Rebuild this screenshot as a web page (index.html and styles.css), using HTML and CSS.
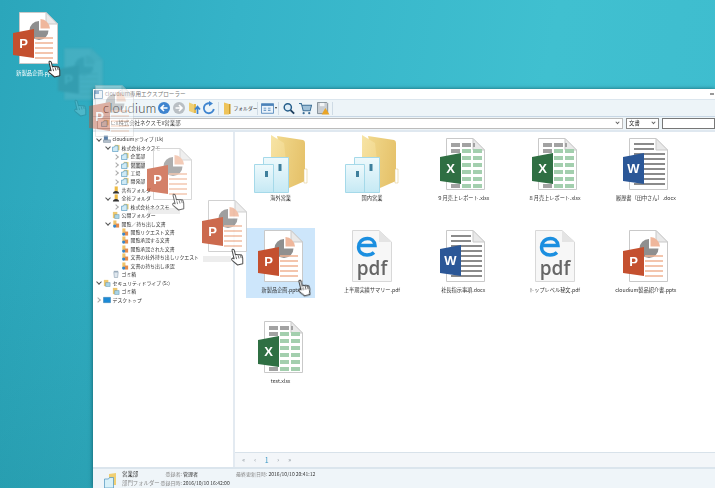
FILE: index.html
```html
<!DOCTYPE html>
<html lang="ja">
<head>
<meta charset="utf-8">
<title>cloudium専用エクスプローラー</title>
<link rel="stylesheet" href="styles.css">
</head>
<body>
<svg class="defs" width="0" height="0" aria-hidden="true">
  <defs>
    <linearGradient id="gold" x1="0" y1="0" x2="1" y2="0.3">
      <stop offset="0" stop-color="#f1d88c"/><stop offset="1" stop-color="#e6c36c"/>
    </linearGradient>
    <linearGradient id="flap" x1="0" y1="0" x2="1" y2="1">
      <stop offset="0" stop-color="#f7e4a6"/><stop offset="1" stop-color="#eed07e"/>
    </linearGradient>
    <linearGradient id="ice" x1="0" y1="0" x2="0" y2="1">
      <stop offset="0" stop-color="#eef9fc"/><stop offset="1" stop-color="#c5e9f4"/>
    </linearGradient>
    <symbol id="page" viewBox="0 0 60 56">
      <path d="M13.5 1.5H40L51.5 13V52.5H13.5Z" fill="#fff" stroke="#c9c9c9"/>
      <path d="M40 1.5V13H51.500Z" fill="#e9e9e9" stroke="#c9c9c9"/>
    </symbol>
    <symbol id="ppt" viewBox="0 0 60 56">
      <use href="#page" width="60" height="56"/>
      <path d="M33 10A9.500 9.500 0 1 0 42.500 19.500H33Z" fill="#8f8f8f"/>
      <path d="M34.500 8A10 10 0 0 1 44 17.500H34.500Z" fill="#efb79c"/>
      <path d="M29 27H47M29 32H47M29 37H47M29 42H47M29 47H47" stroke="#f0b393" stroke-width="1.500"/>
      <path d="M7 22L28 18V47L7 44Z" fill="#c4502f"/>
      <text x="17.500" y="37" class="ic-letter">P</text>
    </symbol>
    <symbol id="xls" viewBox="0 0 60 56">
      <use href="#page" width="60" height="56"/>
      <path d="M18 6h9v4h-9zM29 6h9v4h-9zM18 12h9v4h-9z" fill="#a2a2a2"/>
      <path d="M40 6h2v4h-2z" fill="#a2a2a2"/>
      <path d="M29 12h9v4h-9zM40 12h9v4h-9zM29 19h9v4h-9zM40 19h9v4h-9zM29 26h9v4h-9zM40 26h9v4h-9zM29 33h9v4h-9zM40 33h9v4h-9zM29 40h9v4h-9zM40 40h9v4h-9zM29 47h9v4h-9zM40 47h9v4h-9z" fill="#a3cfae"/>
      <path d="M18 47h9v4h-9z" fill="#a2a2a2"/>
      <path d="M7 20L28 16V47L7 44Z" fill="#2f6f43"/>
      <text x="17.500" y="36" class="ic-letter">X</text>
    </symbol>
    <symbol id="doc" viewBox="0 0 60 56">
      <use href="#page" width="60" height="56"/>
      <path d="M18 7H38M18 12H38M18 17H49M28 22H49M28 27H49M28 32H49M28 37H49M28 42H49M18 47H49" stroke="#8b8b8b" stroke-width="1.800"/>
      <path d="M7 20L28 16V47L7 44Z" fill="#2b5797"/>
      <text x="17.500" y="36" class="ic-letter">W</text>
    </symbol>
    <symbol id="pdf" viewBox="0 0 60 56">
      <path d="M10.500 1.500H37L49.500 13V52.500H10.500Z" fill="#f7f7f7" stroke="#d8d8d8"/>
      <path d="M37 1.500V13H49.500Z" fill="#e4e4e4"/>
      <path d="M17.500 16.500H33C32.500 11.500 29 9.500 25.500 9.500C20 9.500 16.500 13.500 16.500 18C16.500 23 20.500 26 25 26C28 26 30.500 25 32 23.500" fill="none" stroke="#1b8fe0" stroke-width="3.400"/>
      <text x="30" y="46" class="ic-pdf">pdf</text>
    </symbol>
    <symbol id="folder" viewBox="0 0 60 56" overflow="visible">
      <path d="M26 -1L52 3Q54 3.500 54 6V44L38 51Z" fill="url(#gold)"/>
      <path d="M53 32h3v14h-3z" fill="#fff" stroke="#dcc07a" stroke-width=".5"/>
      <path d="M20 -2L33 6L38 51L20 30Z" fill="url(#flap)"/>
      <path d="M12.500 20.500H37.500V55.500H12.500Z" fill="url(#ice)" stroke="#a5d9e9"/>
      <path d="M3.500 27.500H22.500V55.500H3.500Z" fill="url(#ice)" stroke="#a5d9e9"/>
      <path d="M14 34h3v6h-3zM27.500 27h3v7h-3z" fill="#3e7f9c"/>
    </symbol>
    <symbol id="hand" viewBox="0 0 16 20">
      <path d="M4.600 1.200c1 0 1.700.7 1.700 1.700v5l1-.2c.8-.1 1.400.2 1.700.7.900-.3 1.600 0 1.900.6.900-.2 1.800.2 2 1 .3 2 .1 4-.5 5.600l-.8 3.200H5.900L1.600 13c-.7-1-.5-1.900.1-2.300.6-.4 1.300-.3 1.800.2l.4.6V2.900c0-1 .2-1.700.7-1.700z" fill="#fff" stroke="#333" stroke-width="1.100" stroke-linejoin="round"/>
      <path d="M6.400 9.500v3M9 9v3.500M11.400 9.600v3" stroke="#333" stroke-width=".8"/>
    </symbol>
    <symbol id="t-folder" viewBox="0 0 9 9">
      <path d="M3 .8L8.500 1V7H3Z" fill="#f1d27c"/>
      <path d="M.6 3.500h2l1-1.500h3.200v6.500H.6Z" fill="#cfeaf5" stroke="#4a93bd" stroke-width=".7"/>
    </symbol>
    <symbol id="t-share" viewBox="0 0 9 9">
      <path d="M3 .5h3.500v6H3Z" fill="#eebb45"/>
      <path d="M1 8.500c0-2 1.500-3 3.500-3s3.500 1 3.500 3Z" fill="#333"/>
    </symbol>
    <symbol id="t-doc" viewBox="0 0 9 9">
      <path d="M1.500 .5h3.500v6H1.500Z" fill="#f0c36a"/>
      <path d="M4 4h4v4.500H4Z" fill="#e58b4c"/>
      <circle cx="3" cy="6.800" r="1.800" fill="#3b86c8"/>
    </symbol>
    <symbol id="t-drive" viewBox="0 0 9 9">
      <path d="M1 .5h4.500v5H1Z" fill="#5a7fa8"/>
      <path d="M.5 5.500h8v2.800h-8Z" fill="#b8c4d0" stroke="#5a7084" stroke-width=".5"/>
    </symbol>
    <symbol id="t-trash" viewBox="0 0 9 9">
      <path d="M2 2.500h5l-.7 6H2.700Z" fill="#dfe7ee" stroke="#7d93a8" stroke-width=".6"/>
      <path d="M2 1.500h5" stroke="#7d93a8"/>
    </symbol>
    <symbol id="t-lock" viewBox="0 0 9 9">
      <path d="M1 1h5v7H1Z" fill="#eec86f"/>
      <path d="M3 4h5v4.500H3Z" fill="#a9d5e8" stroke="#5a8ba5" stroke-width=".5"/>
    </symbol>
    <symbol id="t-desk" viewBox="0 0 9 9">
      <path d="M.5 1.500h8v6h-8Z" fill="#1c8ad6" stroke="#105f98" stroke-width=".4"/>
    </symbol>
  </defs>
</svg>

<div class="desktop">
  <section class="window">
    <header class="titlebar">
      <svg class="title-icon" viewBox="0 0 9 9"><path d="M.5.5h8v8h-8Z" fill="#e8f2fa" stroke="#5c8db5"/><path d="M1 1h4v3H1Z" fill="#3e78b2"/></svg>
      <span class="title-text">cloudium専用エクスプローラー</span>
      <span class="minimize"></span>
    </header>

    <nav class="toolbar">
      <span class="logo">cloudium</span>
      <svg class="tb" viewBox="0 0 14 14"><circle cx="7" cy="7" r="6" fill="#3f84cf"/><path d="M10.500 7H4.500M7 4L4 7l3 3" fill="none" stroke="#fff" stroke-width="1.600"/></svg>
      <svg class="tb" viewBox="0 0 14 14"><circle cx="7" cy="7" r="6" fill="#b9bfc4"/><path d="M3.500 7h6M7 4l3 3-3 3" fill="none" stroke="#fff" stroke-width="1.600"/></svg>
      <svg class="tb" viewBox="0 0 14 14"><path d="M2 1.500L7 3.500V12L2 10Z" fill="#f0cf73"/><path d="M7 3h2v9H7Z" fill="#e3b94e"/><path d="M10.500 13V6M8 8.500l2.500-3 2.500 3" fill="none" stroke="#3f84cf" stroke-width="1.700"/></svg>
      <svg class="tb" viewBox="0 0 14 14"><path d="M11.800 8A5 5 0 1 1 8 2.400" fill="none" stroke="#3f84cf" stroke-width="1.800"/><path d="M7 0L11 2.600 7 5.200Z" fill="#3f84cf"/></svg>
      <i class="sep sep-a"></i>
      <svg class="tb-folder" viewBox="0 0 8 13"><path d="M1 .5L6 2V12.500H1Z" fill="#eec35a"/><path d="M6 2h1.500v10H6Z" fill="#c99a2c"/></svg>
      <span class="tb-label">フォルダー</span>
      <i class="sep sep-b"></i>
      <svg class="tb-view" viewBox="0 0 15 12"><path d="M.5.5h14v11H.5Z" fill="#eaf3fb" stroke="#4b82b8"/><path d="M.5.5h14v2.500H.5Z" fill="#4b82b8"/><path d="M3 5h3v1H3zM8 5h3v1H8zM3 7.500h3v1H3zM8 7.500h3v1H8z" fill="#4b82b8"/></svg>
      <i class="caret"></i>
      <i class="sep sep-c"></i>
      <svg class="tb-search" viewBox="0 0 14 14"><circle cx="5.600" cy="5.600" r="4.200" fill="#dcecf7" stroke="#255d8a" stroke-width="1.700"/><path d="M8.800 8.800L13 13" stroke="#1d3f5f" stroke-width="2.200"/></svg>
      <svg class="tb-cart" viewBox="0 0 14 14"><path d="M0 1.500h2.500L4.500 9.500H12L13.500 3.500H3" fill="#9fc0d8" stroke="#3d6f96" stroke-width="1.100"/><circle cx="5" cy="12" r="1.200" fill="#3d6f96"/><circle cx="11" cy="12" r="1.200" fill="#3d6f96"/></svg>
      <svg class="tb-save" viewBox="0 0 14 14"><path d="M.5.5h10l1 1v11H.5Z" fill="#c9ced3" stroke="#7f8a93"/><path d="M3 1h5v3.500H3Z" fill="#f2f4f6"/><path d="M9 6.500l4.500 7H5Z" fill="#e9a425"/></svg>
      <i class="sep"></i>
    </nav>

    <div class="addressbar">
      <div class="address">
        <svg class="addr-icon" viewBox="0 0 9 9"><use href="#t-folder" width="9" height="9"/></svg>
        <span>L:¥株式会社ネクスモ¥営業部</span>
        <i class="chev"></i>
      </div>
      <div class="select"><span>文書</span><i class="chev"></i></div>
      <div class="search"></div>
    </div>

    <main class="body">
      <aside class="tree">
        <div class="row l0 open"><i></i><svg><use href="#t-drive"/></svg><span>cloudiumドライブ (Lk)</span></div>
        <div class="row l1 open"><i></i><svg><use href="#t-folder"/></svg><span>株式会社ネクスモ</span></div>
        <div class="row l2 shut"><i></i><svg><use href="#t-folder"/></svg><span>企業部</span></div>
        <div class="row l2 shut cur"><i></i><svg><use href="#t-folder"/></svg><span>営業部</span></div>
        <div class="row l2 shut"><i></i><svg><use href="#t-folder"/></svg><span>工場</span></div>
        <div class="row l2 shut"><i></i><svg><use href="#t-folder"/></svg><span>開発部</span></div>
        <div class="row l1"><i></i><svg><use href="#t-share"/></svg><span>共有フォルダ</span></div>
        <div class="row l1 open"><i></i><svg><use href="#t-share"/></svg><span>全社フォルダ</span></div>
        <div class="row l2 shut"><i></i><svg><use href="#t-folder"/></svg><span>株式会社ネクスモ</span></div>
        <div class="row l1"><i></i><svg><use href="#t-lock"/></svg><span>公開フォルダー</span></div>
        <div class="row l1 open"><i></i><svg><use href="#t-doc"/></svg><span>閲覧／持ち出し文書</span></div>
        <div class="row l2"><i></i><svg><use href="#t-doc"/></svg><span>閲覧リクエスト文書</span></div>
        <div class="row l2"><i></i><svg><use href="#t-doc"/></svg><span>閲覧承認する文書</span></div>
        <div class="row l2"><i></i><svg><use href="#t-doc"/></svg><span>閲覧承認された文書</span></div>
        <div class="row l2"><i></i><svg><use href="#t-doc"/></svg><span>文書の社外持ち出しリクエスト</span></div>
        <div class="row l2"><i></i><svg><use href="#t-doc"/></svg><span>文書の持ち出し承認</span></div>
        <div class="row l1"><i></i><svg><use href="#t-trash"/></svg><span>ゴミ箱</span></div>
        <div class="row l0 open"><i></i><svg><use href="#t-lock"/></svg><span>セキュリティドライブ (S:)</span></div>
        <div class="row l1"><i></i><svg><use href="#t-lock"/></svg><span>ゴミ箱</span></div>
        <div class="row l0 shut"><i></i><svg><use href="#t-desk"/></svg><span>デスクトップ</span></div>
      </aside>

      <div class="content">
        <div class="files">
          <figure class="file"><svg class="fi"><use href="#folder"/></svg><figcaption>海外営業</figcaption></figure>
          <figure class="file"><svg class="fi"><use href="#folder"/></svg><figcaption>国内営業</figcaption></figure>
          <figure class="file"><svg class="fi"><use href="#xls"/></svg><figcaption>９月売上レポート.xlsx</figcaption></figure>
          <figure class="file"><svg class="fi"><use href="#xls"/></svg><figcaption>８月売上レポート.xlsx</figcaption></figure>
          <figure class="file"><svg class="fi"><use href="#doc"/></svg><figcaption>履歴書（田中さん）.docx</figcaption></figure>
          <figure class="file selected"><svg class="fi"><use href="#ppt"/></svg><figcaption>新製品企画.pptx</figcaption></figure>
          <figure class="file"><svg class="fi"><use href="#pdf"/></svg><figcaption>上半期実績サマリー.pdf</figcaption></figure>
          <figure class="file"><svg class="fi"><use href="#doc"/></svg><figcaption>社長指示事項.docx</figcaption></figure>
          <figure class="file"><svg class="fi"><use href="#pdf"/></svg><figcaption>トップレベル秘文.pdf</figcaption></figure>
          <figure class="file"><svg class="fi"><use href="#ppt"/></svg><figcaption>cloudium製品紹介書.pptx</figcaption></figure>
          <figure class="file"><svg class="fi"><use href="#xls"/></svg><figcaption>test.xlsx</figcaption></figure>
        </div>
        <div class="pager"><span>«</span><span>‹</span><b>1</b><span>›</span><span>»</span></div>
      </div>
    </main>

    <footer class="status">
      <svg class="st-icon" viewBox="0 0 14 15"><path d="M5 1L12 0V12H5Z" fill="#f0cf73"/><path d="M.5 6h4l1-1.500h4V15H.5Z" fill="#d7f0f8" stroke="#4a93bd" stroke-width=".7"/></svg>
      <div class="st-col st-name"><b>営業部</b><span>部門フォルダー</span></div>
      <div class="st-reg">
        <span>登録者:</span><b>管理者</b>
        <span>登録日時:</span><b>2016/10/10 16:42:00</b>
      </div>
      <div class="st-col st-upd"><p><span>最終更新日時:</span> <b>2016/10/10 20:41:12</b></p></div>
    </footer>
  </section>

  <!-- dragged file: fading trail over the desktop and the window -->
  <svg class="ghost g2"><use href="#ppt"/></svg>
  <svg class="ghost g3"><use href="#ppt"/></svg>
  <svg class="ghost g4"><use href="#ppt"/></svg>
  <svg class="ghost g5"><use href="#ppt"/></svg>
  <svg class="ghost g1"><use href="#ppt"/></svg>
  <span class="ghost-label gl1">新製品企画.pptx</span>
  <span class="ghost-label gl4"></span>
  <span class="ghost-label gl5"></span>
  <svg class="hand h1"><use href="#hand"/></svg>
  <svg class="hand h2"><use href="#hand"/></svg>
  <svg class="hand h4"><use href="#hand"/></svg>
  <svg class="hand h5"><use href="#hand"/></svg>
  <svg class="hand h6"><use href="#hand"/></svg>
</div>
</body>
</html>
```
FILE: styles.css
```css
* { box-sizing: border-box; }
html, body { margin: 0; padding: 0; }
body { width: 715px; height: 488px; overflow: hidden; font-family: "Noto Sans CJK JP", "Noto Sans", sans-serif; }
.defs { position: absolute; }
p, figure { margin: 0; }

.desktop {
  position: relative;
  width: 715px;
  height: 488px;
  overflow: hidden;
  background:
    linear-gradient(180deg, rgba(20,120,130,0) 40%, rgba(20,120,130,.25) 100%),
    linear-gradient(100deg, #2ba6bb 0%, #35b3c8 30%, #40c0d0 70%, #3ebcce 100%);
}

/* window */
.window {
  position: absolute;
  left: 93px;
  top: 89px;
  width: 622px;
  height: 399px;
  display: flex;
  flex-direction: column;
  background: #fff;
  color: #333;
  font-size: 5.4px;
  line-height: 8px;
  filter: blur(.3px);
  box-shadow: 0 0 4px rgba(0,50,60,.65);
}
.titlebar { height: 10px; display: flex; align-items: center; padding-left: 1px; background: #fff; }
.title-icon { width: 9px; height: 9px; margin-right: 2px; }
.title-text { color: #777; font-size: 5.6px; }
.minimize { margin-left: auto; margin-right: 1px; width: 4px; height: 2px; background: #999; }

.toolbar { height: 18px; display: flex; align-items: center; background: #edf4f8; border-top: 1px solid #dce6ee; border-bottom: 1px solid #c7d6e4; padding-left: 10px; }
.logo { width: 53px; margin-right: .5px; font-family: "Lato", "Open Sans", sans-serif; font-weight: 300; font-size: 13px; letter-spacing: .3px; color: #333; line-height: 16px; }
.tb { width: 14px; height: 14px; flex: none; margin-right: 1px; }
.sep { width: 1px; height: 13px; flex: none; background: #cfdbe5; }
.sep-a { margin: 0 4px 0 1px; }
.tb-folder { width: 8px; height: 13px; flex: none; margin-right: 3px; }
.tb-label { width: 22px; font-size: 4.8px; flex: none; color: #333; white-space: nowrap; }
.sep-b { margin: 0 3px 0 1px; }
.tb-view { width: 13px; height: 11px; flex: none; }
.caret { width: 0; height: 0; flex: none; margin-left: 1px; border-left: 1.500px solid transparent; border-right: 1.500px solid transparent; border-top: 2px solid #333; }
.sep-c { margin: 0 4px 0 1px; }
.tb-search { width: 12px; height: 13px; flex: none; margin-right: 4px; }
.tb-cart { width: 13px; height: 13px; flex: none; margin-right: 5px; }
.tb-save { width: 13px; height: 13px; flex: none; margin-right: 2px; }

.addressbar { height: 15px; display: flex; align-items: center; gap: 3px; padding: 0 0 1px 4px; background: #edf4f8; border-bottom: 2px solid #dfe8f0; }
.address { width: 526px; height: 11px; flex: none; display: flex; align-items: center; background: #fff; border: 1px solid #bcbcbc; color: #444; padding-left: 3px; }
.addr-icon { width: 8px; height: 8px; margin-right: 2px; }
.chev { width: 3px; height: 3px; margin-left: auto; margin-right: 3px; border-right: 1px solid #666; border-bottom: 1px solid #666; transform: rotate(45deg) translate(-1px,-1px); }
.select { width: 33px; height: 11px; flex: none; display: flex; align-items: center; padding-left: 2px; background: #fff; border: 1px solid #8a8a8a; }
.search { flex: 1; height: 11px; background: #fff; border: 1px solid #777; }

.body { flex: 1; min-height: 0; display: flex; }
.tree { width: 142px; flex: none; padding-top: 3px; border-right: 2px solid #e3eaf1; font-size: 4.9px; }
.row { height: 8.450px; display: flex; align-items: center; padding-left: 1px; white-space: nowrap; color: #333; }
.row.l1 { padding-left: 10px; }
.row.l2 { padding-left: 19px; }
.row i { width: 9px; height: 8px; flex: none; position: relative; }
.row svg { width: 8px; height: 8px; flex: none; margin-right: 1.500px; }
.row.open i::before, .row.shut i::before { content: ""; position: absolute; width: 3px; height: 3px; border-right: 1px solid #555; border-bottom: 1px solid #555; }
.row.open i::before { left: 2.500px; top: 1.500px; transform: rotate(45deg); }
.row.shut i::before { left: 2px; top: 2.500px; border-color: #aaa; transform: rotate(-45deg); }
.row.cur span { background: #dcdcdc; }

.content { flex: 1; min-width: 0; display: flex; flex-direction: column; }
.files { flex: 1; display: grid; grid-template-columns: repeat(5, 91.300px); grid-auto-rows: 91.500px; align-content: start; padding: 5px 0 0 0; }
.file { position: relative; display: flex; flex-direction: column; align-items: center; color: #333; }
.fi { width: 60px; height: 56px; flex: none; overflow: visible; }
.file figcaption { height: 10px; line-height: 10px; white-space: nowrap; font-size: 5.2px; }
.file.selected::before { content: ""; position: absolute; left: 11px; right: 11px; top: -1px; height: 70px; background: #cde6fb; }
.file.selected > * { position: relative; }
.ic-letter { font: 700 13px "Liberation Sans", sans-serif; fill: #fff; text-anchor: middle; }
.ic-pdf { font: 600 19px "Open Sans", "Liberation Sans", sans-serif; fill: #666; text-anchor: middle; }

.pager { height: 15px; flex: none; display: flex; align-items: center; padding-left: 3px; background: #f3f6f9; border-top: 1px solid #d8e2ea; color: #858f96; font-size: 6px; }
.pager span, .pager b { width: 11.500px; text-align: center; font-weight: 400; }
.pager b { color: #3a97c4; font-size: 7px; }

.status { height: 21px; flex: none; display: flex; padding-left: 11px; background: #eff5f9; border-top: 2px solid #dbe5ed; }
.st-icon { width: 14px; height: 15px; margin-top: 4px; flex: none; margin-right: 4px; }
.st-col { display: flex; flex-direction: column; gap: 1px; padding-top: 1px; color: #888; white-space: nowrap; }
.st-col b, .st-reg b { font-weight: 400; color: #333; }
.st-name { width: 36px; }
.st-reg { width: 78px; flex: none; display: grid; grid-template-columns: 25px 1fr; column-gap: 0; row-gap: 1px; align-content: start; padding-top: 1px; color: #888; white-space: nowrap; font-size: 5px; }
.st-reg span { text-align: right; padding-right: 1px; }
.st-upd { font-size: 5px; }

/* drag trail */
.ghost { position: absolute; width: 60px; height: 56px; overflow: visible; filter: blur(.5px); }
.g1 { left: 6px; top: 11px; }
.g2 { left: 51px; top: 47px; opacity: .14; filter: grayscale(.9) brightness(.8) blur(1px); }
.g3 { left: 82px; top: 84px; opacity: .42; filter: blur(.7px); }
.g4 { left: 140px; top: 147px; opacity: .72; }
.g5 { left: 195px; top: 199px; opacity: .85; }
.ghost-label { position: absolute; height: 6px; font-size: 5.4px; line-height: 6px; white-space: nowrap; }
.gl1 { left: 16px; top: 70px; color: #fff; filter: blur(.4px); }
.gl4 { left: 148px; top: 208px; width: 32px; background: rgba(225,225,225,.6); }
.gl5 { left: 203px; top: 256px; width: 28px; background: rgba(225,225,225,.6); }
.hand { position: absolute; width: 15px; height: 19px; transform: rotate(-14deg); overflow: visible; }
.h1 { left: 47px; top: 59px; }
.h2 { left: 73px; top: 98px; opacity: .15; }
.h4 { left: 171px; top: 192px; opacity: .7; }
.h5 { left: 230px; top: 247px; opacity: .85; }
.h6 { left: 297px; top: 278px; }
```
